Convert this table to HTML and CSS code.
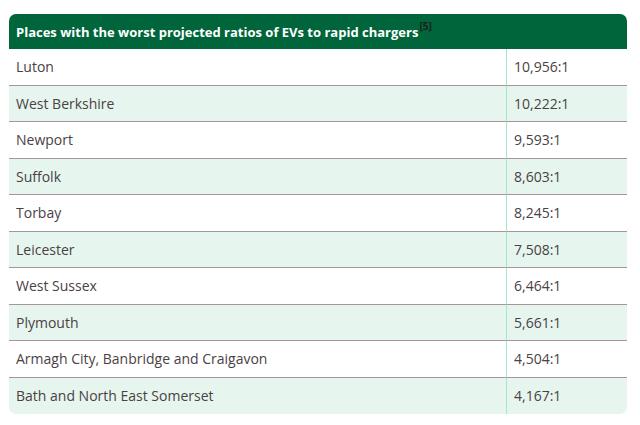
FILE: index.html
```html
<!DOCTYPE html>
<html>
<head>
<meta charset="utf-8">
<link rel="stylesheet" href="styles.css">
</head>
<body>
<div class="wrap">
<table class="ratios">
  <thead>
    <tr><th colspan="2">Places with the worst projected ratios of EVs to rapid chargers<sup>[5]</sup></th></tr>
  </thead>
  <tbody>
    <tr><td class="place">Luton</td><td class="num">10,956:1</td></tr>
    <tr class="alt"><td class="place">West Berkshire</td><td class="num">10,222:1</td></tr>
    <tr><td class="place">Newport</td><td class="num">9,593:1</td></tr>
    <tr class="alt"><td class="place">Suffolk</td><td class="num">8,603:1</td></tr>
    <tr><td class="place">Torbay</td><td class="num">8,245:1</td></tr>
    <tr class="alt"><td class="place">Leicester</td><td class="num">7,508:1</td></tr>
    <tr><td class="place">West Sussex</td><td class="num">6,464:1</td></tr>
    <tr class="alt"><td class="place">Plymouth</td><td class="num">5,661:1</td></tr>
    <tr><td class="place">Armagh City, Banbridge and Craigavon</td><td class="num">4,504:1</td></tr>
    <tr class="alt last"><td class="place">Bath and North East Somerset</td><td class="num">4,167:1</td></tr>
  </tbody>
</table>
</div>
</body>
</html>
```

FILE: styles.css
```css
html, body {
  margin: 0;
  padding: 0;
  background: #ffffff;
}
.wrap {
  padding: 14px 13px 0 9px;
}
.ratios {
  width: 618px;
  border-collapse: separate;
  border-spacing: 0;
  font-family: "Open Sans", "Noto Sans", sans-serif;
  font-size: 14px;
  color: #4a4145;
}
.ratios th {
  background: #00653a;
  color: #ffffff;
  text-align: left;
  font-weight: 700;
  font-size: 13px;
  height: 35px;
  padding: 0 7px;
  border-radius: 7px 7px 0 0;
  box-sizing: border-box;
}
.ratios sup {
  font-size: 10px;
  font-weight: 700;
  color: #1e1e1e;
  vertical-align: 7px;
  line-height: 0;
  margin-left: 1px;
}
.ratios td {
  height: 36.5px;
  padding: 0 7px;
  box-sizing: border-box;
  border-bottom: 1px solid #a8949e;
}
.ratios td.place {
  width: 498px;
  border-right: 1px solid #a6e6c8;
}
.ratios tr.alt td {
  background: #e6f6ee;
}
.ratios tr.last td {
  border-bottom: none;
}
.ratios tr.last td.place {
  border-bottom-left-radius: 7px;
}
.ratios tr.last td.num {
  border-bottom-right-radius: 7px;
}
```
